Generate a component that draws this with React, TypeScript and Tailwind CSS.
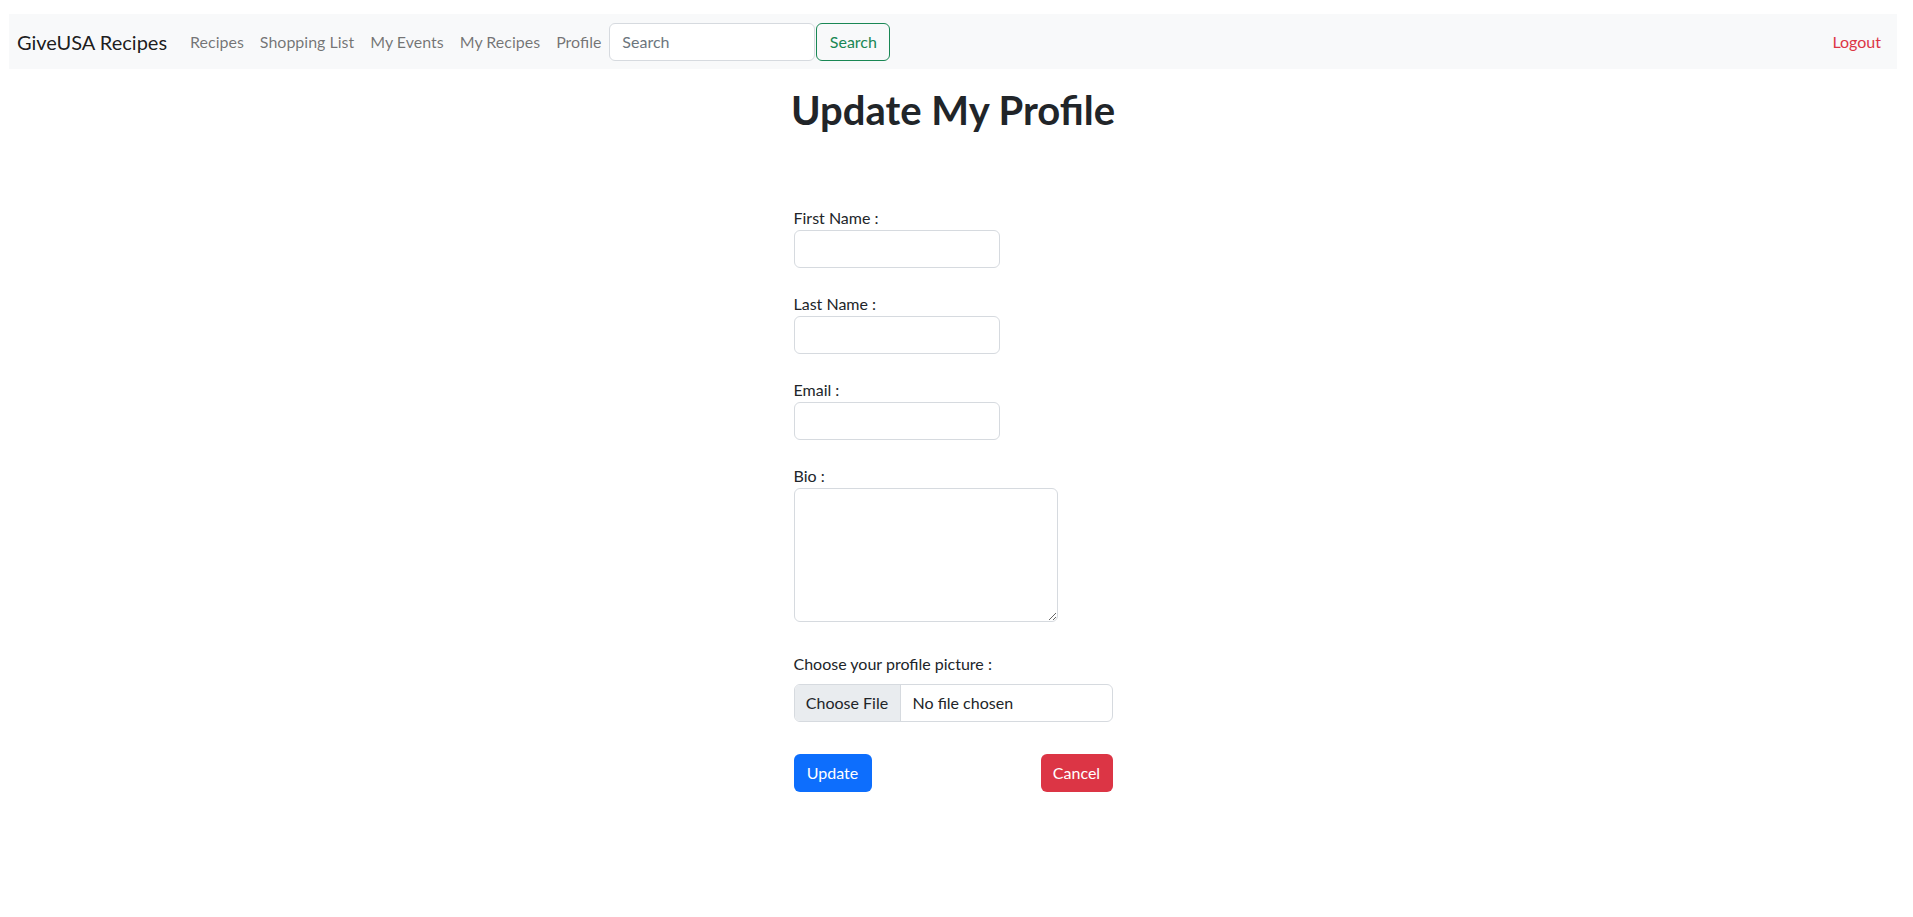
const navLinks = ["Recipes", "Shopping List", "My Events", "My Recipes", "Profile"];

const fields = [
  { id: "firstName", label: "First Name :" },
  { id: "lastName", label: "Last Name :" },
  { id: "email", label: "Email :" },
];

export default function App() {
  return (
    <div className="min-h-screen bg-white pl-[9px] pr-[16px] pt-[14px] text-[#212529] font-['Lato',sans-serif]">
      {/* Navbar */}
      <nav className="flex h-[55px] items-center bg-[#f8f9fa] pl-2 pr-4">
        <span className="mr-[15px] text-[20px] leading-[30px] text-black/90">GiveUSA Recipes</span>
        <ul className="flex items-center">
          {navLinks.map((link) => (
            <li key={link}>
              <a href="#" className="block px-2 text-[16px] leading-6 text-black/55">
                {link}
              </a>
            </li>
          ))}
        </ul>
        <form className="flex items-center" onSubmit={(e) => e.preventDefault()}>
          <input
            type="search"
            placeholder="Search"
            className="h-[38px] w-[206px] rounded-[6px] border border-[#d6dadf] bg-white px-3 text-[16px] placeholder:text-[#6c757d] outline-none"
          />
          <button className="ml-[1px] h-[38px] w-[74px] rounded-[6px] border border-[#198754] text-[16px] text-[#198754]">
            Search
          </button>
        </form>
        <a href="#" className="ml-auto text-[16px] leading-6 text-[#dc3545]">
          Logout
        </a>
      </nav>

      {/* Title */}
      <h1 className="mt-[17px] text-center text-[40px] leading-[48px] font-bold">Update My Profile</h1>

      {/* Form */}
      <form className="mx-auto mt-[72px] w-[319px]" onSubmit={(e) => e.preventDefault()}>
        {fields.map((f) => (
          <div key={f.id} className="mb-6">
            <label htmlFor={f.id} className="block text-[16px] leading-6">
              {f.label}
            </label>
            <input
              id={f.id}
              type="text"
              className="block h-[38px] w-[206px] rounded-[6px] border border-[#d6dadf] bg-white px-3 outline-none"
            />
          </div>
        ))}

        <div className="mb-[30px]">
          <label htmlFor="bio" className="block text-[16px] leading-6">
            Bio :
          </label>
          <textarea
            id="bio"
            className="block h-[134px] w-[264px] rounded-[6px] border border-[#d6dadf] bg-white px-3 outline-none"
          />
        </div>

        <div className="mb-8">
          <label className="mb-2 block text-[16px] leading-6">Choose your profile picture :</label>
          <div className="flex h-[38px] w-[319px] overflow-hidden rounded-[6px] border border-[#d6dadf] text-[16px]">
            <span className="flex w-[106px] items-center justify-center border-r border-[#d6dadf] bg-[#e9ecef]">
              Choose File
            </span>
            <span className="flex items-center pl-3">No file chosen</span>
          </div>
        </div>

        <div className="flex justify-between">
          <button className="h-[38px] w-[78px] rounded-[6px] bg-[#0d6efd] text-[16px] text-white">Update</button>
          <button className="h-[38px] w-[72px] rounded-[6px] bg-[#dc3545] text-[16px] text-white">Cancel</button>
        </div>
      </form>
    </div>
  );
}
